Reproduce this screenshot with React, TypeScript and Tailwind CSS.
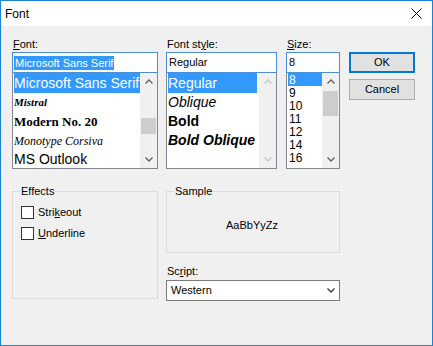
const Chevron = ({ up, className }: { up?: boolean; className?: string }) => (
  <svg width="8" height="5" viewBox="0 0 8 5" className={className}>
    <polyline
      points={up ? "0.5,4.5 4,1 7.5,4.5" : "0.5,0.5 4,4 7.5,0.5"}
      fill="none"
      stroke="currentColor"
      strokeWidth="1.3"
    />
  </svg>
)

interface ScrollBarProps {
  disabled?: boolean
  thumbClass?: string
}

const ScrollBar = ({ disabled, thumbClass }: ScrollBarProps) => {
  const arrow = disabled ? "text-[#c6c6c6]" : "text-[#606060]"
  return (
    <div className="flex w-[17px] shrink-0 flex-col bg-[#f0f0f0]">
      <div className="flex h-[17px] items-center justify-center">
        <Chevron up className={arrow} />
      </div>
      <div className="flex-1">
        {!disabled && <div className={`mx-[1px] bg-[#cdcdcd] ${thumbClass ?? ""}`} />}
      </div>
      <div className="flex h-[17px] items-center justify-center">
        <Chevron className={arrow} />
      </div>
    </div>
  )
}

const Label = ({ children }: { children: React.ReactNode }) => (
  <div className="h-[14px] pl-[1px] text-[11px] leading-[13px] text-black">{children}</div>
)

const TextBox = ({ value, selected }: { value: string; selected?: boolean }) => (
  <div className="flex h-[21px] items-center border border-[#4a8fd4] bg-white px-[1px] text-[11px]">
    {selected ? (
      <span className="bg-[#3399ff] px-[1px] leading-[14px] text-white">{value}</span>
    ) : (
      <span className="px-[1px]">{value}</span>
    )}
  </div>
)

const fontItems = [
  { name: "Microsoft Sans Serif", cls: "text-[14px] font-['Liberation_Sans',sans-serif]" },
  { name: "Mistral", cls: "text-[11px] italic font-bold font-['Liberation_Serif',serif]" },
  { name: "Modern No. 20", cls: "text-[13px] font-bold font-['Liberation_Serif',serif]" },
  { name: "Monotype Corsiva", cls: "text-[12px] italic font-['Liberation_Serif',serif]" },
  { name: "MS Outlook", cls: "text-[14px] font-['Liberation_Sans',sans-serif]" },
]

const styleItems = [
  { name: "Regular", cls: "" },
  { name: "Oblique", cls: "italic" },
  { name: "Bold", cls: "font-bold" },
  { name: "Bold Oblique", cls: "font-bold italic" },
]

const sizeItems = ["8", "9", "10", "11", "12", "14", "16"]

const GroupBox = ({
  title,
  className,
  children,
}: {
  title: string
  className?: string
  children?: React.ReactNode
}) => (
  <div className={`relative border border-[#dcdcdc] ${className ?? ""}`}>
    <span className="absolute top-[-8px] left-[7px] bg-[#f0f0f0] px-[1px] text-[11px] leading-[14px]">
      {title}
    </span>
    {children}
  </div>
)

const CheckRow = ({ children }: { children: React.ReactNode }) => (
  <div className="flex h-[13px] items-center gap-[4px] text-[11px] leading-[13px]">
    <div className="h-[13px] w-[13px] border border-[#333333] bg-white" />
    <span>{children}</span>
  </div>
)

const App = () => {
  return (
    <div className="flex h-[346px] w-[433px] flex-col border border-[#1883d7] bg-[#f0f0f0] font-['Liberation_Sans',Arial,sans-serif] text-black">
      <div className="flex h-[25px] shrink-0 items-center justify-between bg-white pr-[10px] pl-[4px]">
        <span className="text-[12px]">Font</span>
        <svg width="11" height="11" viewBox="0 0 11 11">
          <path d="M0.5 0.5 L10.5 10.5 M10.5 0.5 L0.5 10.5" stroke="#000" strokeWidth="1" />
        </svg>
      </div>

      <div className="flex pt-[12px] pl-[11px]">
        <div className="flex w-[328px] flex-col">
          <div className="flex">
            <div className="flex w-[146px] flex-col">
              <Label>
                <u>F</u>ont:
              </Label>
              <TextBox value="Microsoft Sans Serif" selected />
              <div className="flex h-[96px] border-x border-b border-[#828790] bg-white">
                <div className="flex-1 overflow-hidden pl-[1px]">
                  {fontItems.map((f, i) => (
                    <div
                      key={f.name}
                      className={`flex h-[19px] items-center whitespace-nowrap ${f.cls} ${
                        i === 0 ? "h-[20px] bg-[#3399ff] text-white" : ""
                      }`}
                    >
                      {f.name}
                    </div>
                  ))}
                </div>
                <ScrollBar thumbClass="mt-[28px] h-[16px]" />
              </div>
            </div>

            <div className="ml-[8px] flex w-[111px] flex-col">
              <Label>
                Font st<u>y</u>le:
              </Label>
              <TextBox value="Regular" />
              <div className="flex h-[96px] border-x border-b border-[#828790] bg-white">
                <div className="flex-1 overflow-hidden pr-[2px] pl-[1px]">
                  {styleItems.map((s, i) => (
                    <div
                      key={s.name}
                      className={`flex h-[19px] items-center text-[14px] whitespace-nowrap ${s.cls} ${
                        i === 0 ? "h-[20px] bg-[#3399ff] text-white" : ""
                      }`}
                    >
                      {s.name}
                    </div>
                  ))}
                </div>
                <ScrollBar disabled />
              </div>
            </div>

            <div className="ml-[9px] flex w-[54px] flex-col">
              <Label>
                <u>S</u>ize:
              </Label>
              <TextBox value="8" />
              <div className="flex h-[96px] border-x border-b border-[#828790] bg-white">
                <div className="flex-1 overflow-hidden pl-[1px]">
                  {sizeItems.map((s, i) => (
                    <div
                      key={s}
                      className={`flex h-[13px] items-center pl-[1px] text-[12px] ${
                        i === 0 ? "bg-[#3399ff] text-white" : ""
                      }`}
                    >
                      {s}
                    </div>
                  ))}
                </div>
                <ScrollBar thumbClass="mt-[1px] h-[25px]" />
              </div>
            </div>
          </div>

          <div className="mt-[22px] flex">
            <GroupBox title="Effects" className="h-[108px] w-[146px]">
              <div className="flex flex-col gap-[8px] pt-[14px] pl-[8px]">
                <CheckRow>
                  Stri<u>k</u>eout
                </CheckRow>
                <CheckRow>
                  <u>U</u>nderline
                </CheckRow>
              </div>
            </GroupBox>

            <div className="ml-[8px] flex w-[174px] flex-col">
              <GroupBox title="Sample" className="flex h-[62px] items-center justify-center">
                <span className="pt-[6px] pr-[2px] text-[11px]">AaBbYyZz</span>
              </GroupBox>
              <div className="mt-[12px]">
                <Label>
                  Sc<u>r</u>ipt:
                </Label>
              </div>
              <div className="mt-[1px] flex h-[21px] items-center justify-between border border-[#7a7a7a] bg-white pr-[4px] pl-[4px] text-[11px]">
                <span>Western</span>
                <Chevron className="text-[#333333]" />
              </div>
            </div>
          </div>
        </div>

        <div className="ml-[9px] flex w-[66px] flex-col gap-[6px] pt-[14px]">
          <div className="flex h-[21px] items-center justify-center border-2 border-[#0078d7] bg-[#e1e1e1] text-[11px]">
            OK
          </div>
          <div className="flex h-[21px] items-center justify-center border border-[#adadad] bg-[#e1e1e1] text-[11px]">
            Cancel
          </div>
        </div>
      </div>
    </div>
  )
}

export default App
